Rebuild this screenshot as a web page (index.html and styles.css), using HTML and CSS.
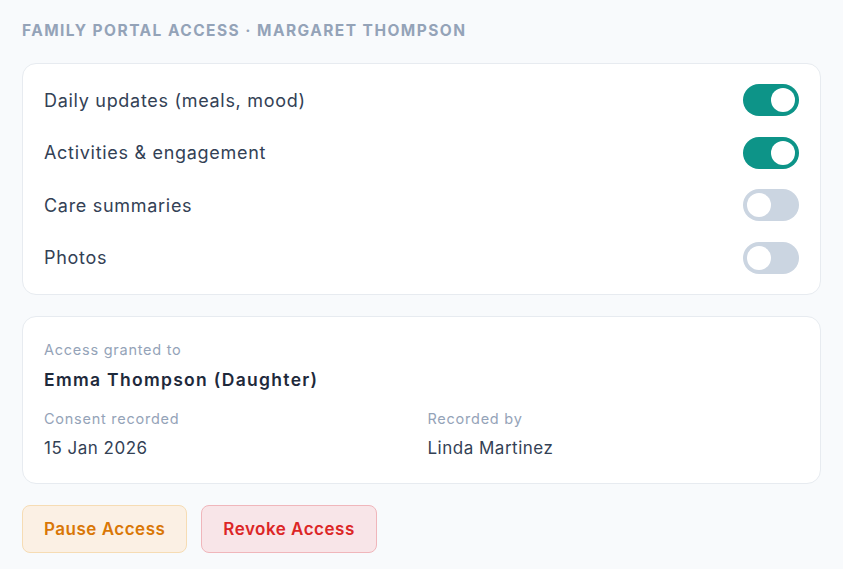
FILE: index.html
```html
<!DOCTYPE html>
<html lang="en">
<head>
    <meta charset="UTF-8">
    <meta name="viewport" content="width=device-width, initial-scale=1.0">
    <title>Family Portal Access</title>
    <link rel="stylesheet" href="styles.css">
</head>
<body>
    <div class="page">
        <h2 class="section-title">Family Portal Access · Margaret Thompson</h2>

        <div class="card toggles">
            <div class="toggle-row">
                <span>Daily updates (meals, mood)</span>
                <span class="switch on"></span>
            </div>
            <div class="toggle-row">
                <span>Activities &amp; engagement</span>
                <span class="switch on"></span>
            </div>
            <div class="toggle-row">
                <span>Care summaries</span>
                <span class="switch"></span>
            </div>
            <div class="toggle-row">
                <span>Photos</span>
                <span class="switch"></span>
            </div>
        </div>

        <div class="card details">
            <div class="label">Access granted to</div>
            <div class="name">Emma Thompson (Daughter)</div>
            <div class="meta">
                <div>
                    <div class="label">Consent recorded</div>
                    <div class="value">15 Jan 2026</div>
                </div>
                <div>
                    <div class="label">Recorded by</div>
                    <div class="value">Linda Martinez</div>
                </div>
            </div>
        </div>

        <div class="actions">
            <button class="btn pause">Pause Access</button>
            <button class="btn revoke">Revoke Access</button>
        </div>
    </div>
</body>
</html>
```

FILE: styles.css
```css
body {
    font-family: Inter, 'Noto Sans', sans-serif;
    margin: 0;
    background-color: #f8fafc;
    color: #334155;
}

.page {
    padding: 21px 22px 20px;
    display: flex;
    flex-direction: column;
}

.section-title {
    margin: 0 0 22px;
    font-size: 15.5px;
    font-weight: 700;
    line-height: 20px;
    letter-spacing: 1.45px;
    text-transform: uppercase;
    color: #94a3b8;
}

.card {
    background-color: #fff;
    border: 1px solid #e7ebf0;
    border-radius: 14px;
}

.toggles {
    padding: 10px 21px;
}

.toggle-row {
    height: 52.5px;
    display: flex;
    align-items: center;
    justify-content: space-between;
    font-size: 18px;
    letter-spacing: 0.7px;
}

.switch {
    width: 56px;
    height: 32px;
    border-radius: 16px;
    background-color: #cbd5e1;
    position: relative;
}
.switch::after {
    content: '';
    position: absolute;
    top: 4px;
    left: 4px;
    width: 24px;
    height: 24px;
    border-radius: 50%;
    background-color: #fff;
}
.switch.on {
    background-color: #0d9488;
}
.switch.on::after {
    left: 28px;
}

.details {
    margin-top: 21px;
    padding: 23px 21px 24px;
}

.label {
    font-size: 14.5px;
    line-height: 20px;
    letter-spacing: 0.75px;
    color: #94a3b8;
}

.name {
    margin-top: 9px;
    font-size: 17.5px;
    font-weight: 600;
    line-height: 22px;
    letter-spacing: 1.3px;
    color: #1e293b;
}

.meta {
    margin-top: 18px;
    display: grid;
    grid-template-columns: 1fr 1fr;
    gap: 12px;
}

.value {
    margin-top: 8px;
    font-size: 17px;
    line-height: 22px;
    letter-spacing: 0.5px;
}

.actions {
    margin-top: 21px;
    display: flex;
    gap: 14px;
}

.btn {
    height: 48px;
    padding: 0 21px;
    border-radius: 8px;
    font-family: inherit;
    font-size: 17px;
    font-weight: 600;
    letter-spacing: 0.5px;
}
.pause {
    background-color: #fbf0e4;
    border: 1px solid #f6dcb4;
    color: #d97706;
}
.revoke {
    background-color: #f8e5e8;
    border: 1px solid #f0b6bb;
    color: #dc2626;
}
```
